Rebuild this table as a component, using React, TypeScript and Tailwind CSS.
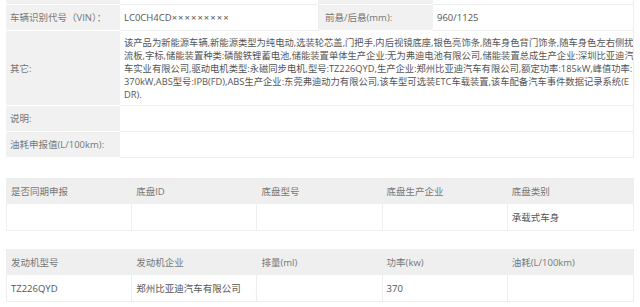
import { Component } from 'react';

const otherLines = [
    '该产品为新能源车辆,新能源类型为纯电动,选装轮芯盖,门把手,内后视镜底座,银色亮饰条,随车身色背门饰条,随车身色左右侧扰',
    '流板,字标,储能装置种类:磷酸铁锂蓄电池,储能装置单体生产企业:无为弗迪电池有限公司,储能装置总成生产企业:深圳比亚迪汽',
    '车实业有限公司,驱动电机类型:永磁同步电机,型号:TZ226QYD,生产企业:郑州比亚迪汽车有限公司,额定功率:185kW,峰值功率:',
    '370kW,ABS型号:IPB(FD),ABS生产企业:东莞弗迪动力有限公司,该车型可选装ETC车载装置,该车配备汽车事件数据记录系统(E',
    'DR).',
];

const chassisHead = ['是否同期申报', '底盘ID', '底盘型号', '底盘生产企业', '底盘类别'];
const chassisRow = ['', '', '', '', '承载式车身'];
const engineHead = ['发动机型号', '发动机企业', '排量(ml)', '功率(kw)', '油耗(L/100km)'];
const engineRow = ['TZ226QYD', '郑州比亚迪汽车有限公司', '', '370', ''];

const label = 'bg-[#f1f1f1] text-[#777] border-b border-white flex items-center pl-[4px] whitespace-nowrap';
const value = 'bg-white text-[#555] border-b border-r border-[#eeeeee] flex items-center pl-[4px] whitespace-nowrap';

export class App extends Component {
    renderGrid(head: string[], row: string[]) {
        return (
            <div className="grid grid-cols-5 border border-[#eeeeee]">
                {head.map((h) => (
                    <div key={h} className="h-[25px] bg-[#efefef] text-[#777] flex items-center pl-[4px] whitespace-nowrap">{h}</div>
                ))}
                {row.map((c, i) => (
                    <div key={i} className={'h-[26px] bg-white text-[#555] flex items-center pl-[4px] whitespace-nowrap ' + (i < 4 ? 'border-r border-[#eeeeee]' : '')}>{c}</div>
                ))}
            </div>
        );
    }

    render() {
        return (
            <div className="w-[640px] h-[307px] bg-white overflow-hidden text-[9.5px] leading-[13px] font-['Open_Sans','Noto_Sans_CJK_SC',sans-serif]">
                <div className="ml-[6px] w-[628px]">
                    <div className="grid grid-cols-[114px_199px_114px_201px]">
                        <div className={label + ' h-[5px]'} />
                        <div className={value + ' h-[5px]'} />
                        <div className={label + ' h-[5px]'} />
                        <div className={value + ' h-[5px]'} />

                        <div className={label + ' h-[26px]'}>车辆识别代号（VIN）：</div>
                        <div className={value + ' h-[26px] pl-[2px]'}>
                            LC0CH4CD<span className="tracking-[1px]">×××××××××</span>
                        </div>
                        <div className={label + ' h-[26px] pl-[6px]'}>前悬/后悬(mm):</div>
                        <div className={value + ' h-[26px]'}>960/1125</div>

                        <div className={label + ' h-[75px]'}>其它:</div>
                        <div className={value + ' col-span-3 h-[75px] pl-[2px] flex-col items-start justify-center overflow-hidden text-[9.3px]'}>
                            {otherLines.map((l) => (
                                <div key={l}>{l}</div>
                            ))}
                        </div>

                        <div className={label + ' h-[26px]'}>说明:</div>
                        <div className={value + ' col-span-3 h-[26px]'} />

                        <div className={label + ' h-[26px]'}>油耗申报值(L/100km):</div>
                        <div className={value + ' col-span-3 h-[26px]'} />
                    </div>

                    <div className="mt-[20px]">{this.renderGrid(chassisHead, chassisRow)}</div>
                    <div className="mt-[18px]">{this.renderGrid(engineHead, engineRow)}</div>
                </div>
            </div>
        );
    }
}

export default App;
